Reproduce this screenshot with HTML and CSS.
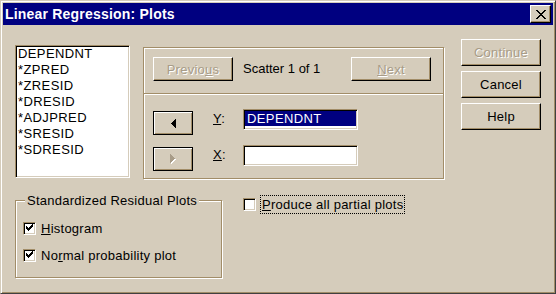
FILE: index.html
```html
<!DOCTYPE html>
<html lang="en">
<head>
  <meta charset="UTF-8">
  <title>Linear Regression: Plots</title>
  <link rel="stylesheet" href="styles.css">
</head>
<body>
  <div class="window">
    <div class="titlebar">
      <span class="title">Linear Regression: Plots</span>
      <span class="close-btn">
        <svg width="10" height="9" viewBox="0 0 10 9" shape-rendering="crispEdges">
          <path fill="#000" d="M0 0h2v1h-2z M8 0h2v1h-2z M1 1h2v1h-2z M7 1h2v1h-2z M2 2h2v1h-2z M6 2h2v1h-2z M3 3h4v1h-4z M4 4h2v1h-2z M3 5h4v1h-4z M2 6h2v1h-2z M6 6h2v1h-2z M1 7h2v1h-2z M7 7h2v1h-2z M0 8h2v1h-2z M8 8h2v1h-2z"/>
        </svg>
      </span>
    </div>

    <div class="dialog">
      <div class="main">
        <div class="top-row">
          <ul class="listbox">
            <li>DEPENDNT</li>
            <li>*ZPRED</li>
            <li>*ZRESID</li>
            <li>*DRESID</li>
            <li>*ADJPRED</li>
            <li>*SRESID</li>
            <li>*SDRESID</li>
          </ul>

          <div class="scatter">
            <div class="scatter-nav">
              <button class="btn btn-nav disabled">Previo<u>u</u>s</button>
              <span class="scatter-count">Scatter 1 of 1</span>
              <button class="btn btn-nav disabled next"><u>N</u>ext</button>
            </div>
            <div class="scatter-vars">
              <div class="var-row">
                <button class="btn btn-arrow">
                  <svg width="5" height="9" viewBox="0 0 5 9" shape-rendering="crispEdges">
                    <path fill="#000" d="M0 4h1v1h-1z M1 3h1v3h-1z M2 2h1v5h-1z M3 1h1v7h-1z M4 0h1v9h-1z"/>
                  </svg>
                </button>
                <span class="var-label"><u>Y</u>:</span>
                <span class="field"><span class="field-sel">DEPENDNT</span></span>
              </div>
              <div class="var-row">
                <button class="btn btn-arrow">
                  <svg width="6" height="10" viewBox="0 0 6 10" shape-rendering="crispEdges">
                    <path fill="#fff" d="M1 1h1v9h-1z M2 2h1v7h-1z M3 3h1v5h-1z M4 4h1v3h-1z M5 5h1v1h-1z"/>
                    <path fill="#a89c88" d="M0 0h1v9h-1z M1 1h1v7h-1z M2 2h1v5h-1z M3 3h1v3h-1z M4 4h1v1h-1z"/>
                  </svg>
                </button>
                <span class="var-label"><u>X</u>:</span>
                <span class="field"></span>
              </div>
            </div>
          </div>
        </div>

        <div class="bottom-row">
          <fieldset class="group">
            <legend>Standardized Residual Plots</legend>
            <div class="check-row">
              <span class="checkbox">
                <svg width="11" height="11" viewBox="0 0 11 11" shape-rendering="crispEdges">
                  <path fill="#000" d="M8 1h1v1h-1z M7 2h2v1h-2z M2 3h1v1h-1z M6 3h3v1h-3z M2 4h2v1h-2z M5 4h3v1h-3z M2 5h5v1h-5z M3 6h3v1h-3z M4 7h1v1h-1z"/>
                </svg>
              </span>
              <span><u>H</u>istogram</span>
            </div>
            <div class="check-row second">
              <span class="checkbox">
                <svg width="11" height="11" viewBox="0 0 11 11" shape-rendering="crispEdges">
                  <path fill="#000" d="M8 1h1v1h-1z M7 2h2v1h-2z M2 3h1v1h-1z M6 3h3v1h-3z M2 4h2v1h-2z M5 4h3v1h-3z M2 5h5v1h-5z M3 6h3v1h-3z M4 7h1v1h-1z"/>
                </svg>
              </span>
              <span>No<u>r</u>mal probability plot</span>
            </div>
          </fieldset>

          <div class="check-row partial">
            <span class="checkbox"></span>
            <span class="focus"><u>P</u>roduce all partial plots</span>
          </div>
        </div>
      </div>

      <div class="side-buttons">
        <button class="btn btn-side disabled">Continue</button>
        <button class="btn btn-side">Cancel</button>
        <button class="btn btn-side">Help</button>
      </div>
    </div>
  </div>
</body>
</html>
```

FILE: styles.css
```css
body {
  margin: 0;
  background: #d5ccbb;
  font-family: "Liberation Sans", Arial, sans-serif;
  font-size: 13px;
  letter-spacing: 0.25px;
  color: #000;
}
.window {
  width: 556px;
  height: 294px;
  box-sizing: border-box;
  border: 1px solid;
  border-color: #d5ccbb #404040 #404040 #d5ccbb;
  box-shadow: inset 1px 1px 0 #fff, inset -1px -1px 0 #a28d68;
  padding: 2px;
  background: #d5ccbb;
}
.titlebar {
  height: 22px;
  background: #000080;
  color: #fff;
  display: flex;
  align-items: center;
  justify-content: space-between;
  padding: 0 2px 0 2px;
}
.title {
  font-weight: bold;
  font-size: 14px;
  letter-spacing: 0.2px;
}
.close-btn {
  width: 21px;
  height: 18px;
  box-sizing: border-box;
  display: flex;
  align-items: center;
  justify-content: center;
  background: #d5ccbb;
  border: 1px solid;
  border-color: #fff #000 #000 #fff;
  box-shadow: inset -1px -1px 0 #a28d68;
}
.close-btn svg { display: block; }

.dialog {
  display: flex;
  padding: 14px 0 0 12px;
}
.main { width: 429px; }
.top-row {
  display: flex;
  align-items: flex-start;
  gap: 13px;
}

.listbox {
  margin: 6px 0 0;
  padding: 0 0 0 2px;
  list-style: none;
  width: 115px;
  height: 133px;
  box-sizing: border-box;
  background: #fff;
  border: 1px solid;
  border-color: #a28d68 #fff #fff #a28d68;
  box-shadow: inset 1px 1px 0 #000, inset -1px -1px 0 #d5ccbb;
}
.listbox li {
  height: 16px;
  line-height: 16px;
  letter-spacing: 0.4px;
}

/* buttons */
.btn {
  font: inherit;
  letter-spacing: inherit;
  color: #000;
  padding: 0;
  margin: 0;
  box-sizing: border-box;
  background: #d5ccbb;
  border: 1px solid;
  border-color: #fff #000 #000 #fff;
  box-shadow: inset -1px -1px 0 #a28d68;
  display: flex;
  align-items: center;
  justify-content: center;
}
.btn.disabled {
  color: #a89c88;
  text-shadow: 1px 1px 0 #fff;
}
.btn-nav { width: 80px; height: 24px; flex: none; }
.btn-side { width: 80px; height: 27px; }
.btn-arrow {
  width: 40px;
  height: 24px;
  flex: none;
  border-color: #000;
  box-shadow: inset 1px 1px 0 #fff, inset -1px -1px 0 #a28d68;
}
.btn-arrow svg { display: block; }

/* scatter frame */
.scatter {
  margin-top: 8px;
  width: 301px;
  height: 132px;
  box-sizing: border-box;
  border: 1px solid #a28d68;
  box-shadow: inset 1px 1px 0 #fff, 1px 1px 0 #fff;
}
.scatter-nav {
  display: flex;
  align-items: flex-start;
  height: 46px;
  box-sizing: border-box;
  padding: 9px 12px 0 9px;
  border-bottom: 1px solid #a28d68;
  box-shadow: 0 1px 0 #fff;
}
.scatter-count {
  margin-left: 10px;
  line-height: 24px;
  letter-spacing: 0;
}
.next { margin-left: auto; }

.scatter-vars {
  display: flex;
  flex-direction: column;
  gap: 12px;
  padding: 17px 0 0 9px;
}
.var-row {
  display: flex;
  align-items: flex-start;
  height: 24px;
}
.var-label {
  width: 30px;
  margin-left: 20px;
  line-height: 16px;
}
.field {
  width: 115px;
  height: 21px;
  margin-top: -2px;
  padding: 1px;
  box-sizing: border-box;
  background: #fff;
  border: 1px solid;
  border-color: #a28d68 #fff #fff #a28d68;
  box-shadow: inset 1px 1px 0 #000, inset -1px -1px 0 #d5ccbb;
}
.field-sel {
  display: block;
  height: 15px;
  line-height: 15px;
  padding-left: 2px;
  background: #000080;
  color: #fff;
  letter-spacing: 0.4px;
}

.side-buttons {
  display: flex;
  flex-direction: column;
  gap: 5px;
  margin-left: 17px;
}

/* bottom area */
.bottom-row {
  display: flex;
  align-items: flex-start;
  margin-top: 14px;
}
.group {
  margin: 0;
  min-width: 0;
  width: 207px;
  box-sizing: border-box;
  padding: 13px 0 14px 7px;
  border: 1px solid #a28d68;
  box-shadow: inset 1px 1px 0 #fff, 1px 1px 0 #fff;
}
.group legend {
  margin-left: 2px;
  padding: 0 2px;
  line-height: 15px;
  background: #d5ccbb;
}
.check-row {
  display: flex;
  align-items: center;
  gap: 5px;
  height: 15px;
}
.check-row.second { margin-top: 12px; }
.checkbox {
  flex: none;
  width: 13px;
  height: 13px;
  box-sizing: border-box;
  background: #fff;
  border: 1px solid;
  border-color: #a28d68 #fff #fff #a28d68;
  box-shadow: inset 1px 1px 0 #000, inset -1px -1px 0 #d5ccbb;
}
.checkbox svg { display: block; }
.partial {
  margin-left: 21px;
  margin-top: 2px;
  height: 19px;
  gap: 4px;
}
.focus {
  border: 1px dotted #000;
  padding: 0 1px;
  line-height: 17px;
}
```
